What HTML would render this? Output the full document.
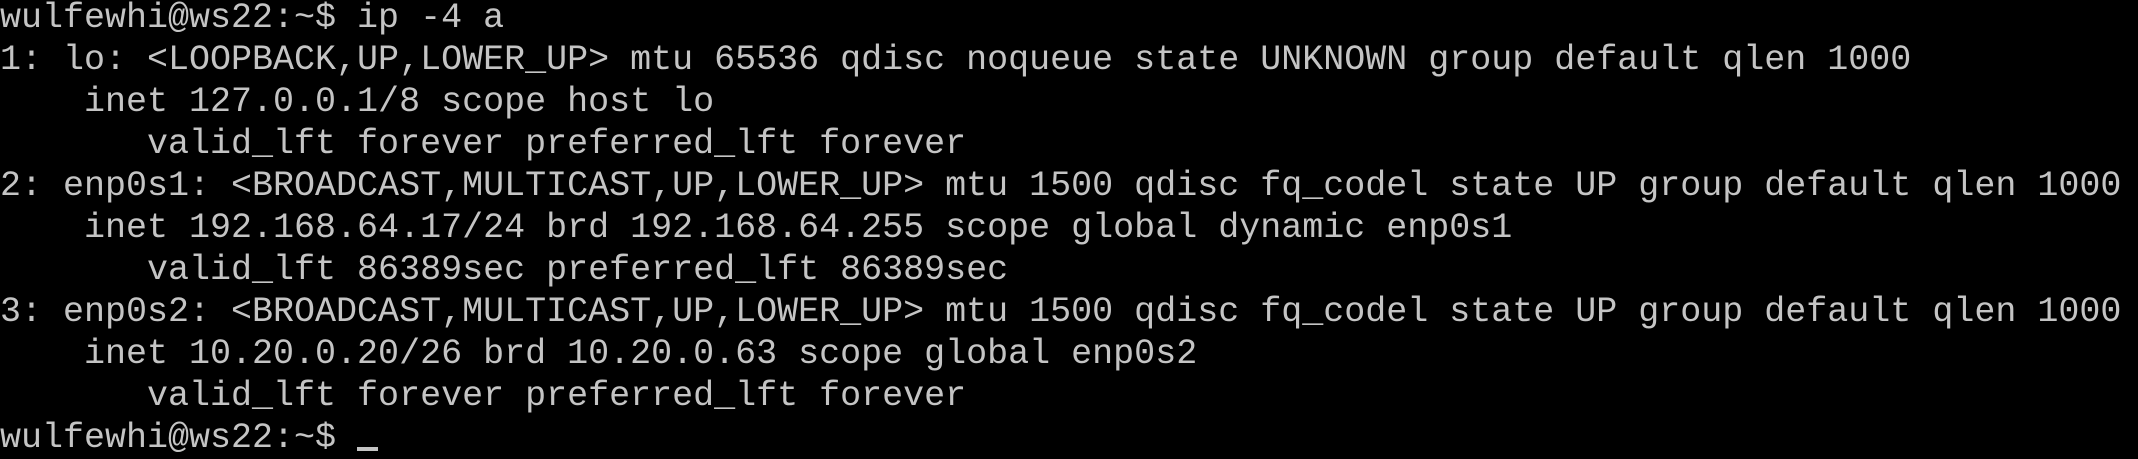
<!DOCTYPE html>
<html><head><style>
html,body{margin:0;padding:0;background:#000;width:2138px;height:454px;overflow:hidden}
pre{margin:0;position:absolute;left:0;top:-3px;font-family:"Liberation Mono",monospace;font-size:35px;line-height:42px;color:#c4c4c4;white-space:pre;letter-spacing:0}
.cur{display:inline-block;width:21px;height:4px;background:#c4c4c4;vertical-align:baseline;margin-bottom:-4px}
</style></head><body>
<pre>wulfewhi@ws22:~$ ip -4 a
1: lo: &lt;LOOPBACK,UP,LOWER_UP&gt; mtu 65536 qdisc noqueue state UNKNOWN group default qlen 1000
    inet 127.0.0.1/8 scope host lo
       valid_lft forever preferred_lft forever
2: enp0s1: &lt;BROADCAST,MULTICAST,UP,LOWER_UP&gt; mtu 1500 qdisc fq_codel state UP group default qlen 1000
    inet 192.168.64.17/24 brd 192.168.64.255 scope global dynamic enp0s1
       valid_lft 86389sec preferred_lft 86389sec
3: enp0s2: &lt;BROADCAST,MULTICAST,UP,LOWER_UP&gt; mtu 1500 qdisc fq_codel state UP group default qlen 1000
    inet 10.20.0.20/26 brd 10.20.0.63 scope global enp0s2
       valid_lft forever preferred_lft forever
wulfewhi@ws22:~$ <span class="cur"></span></pre>
</body></html>
